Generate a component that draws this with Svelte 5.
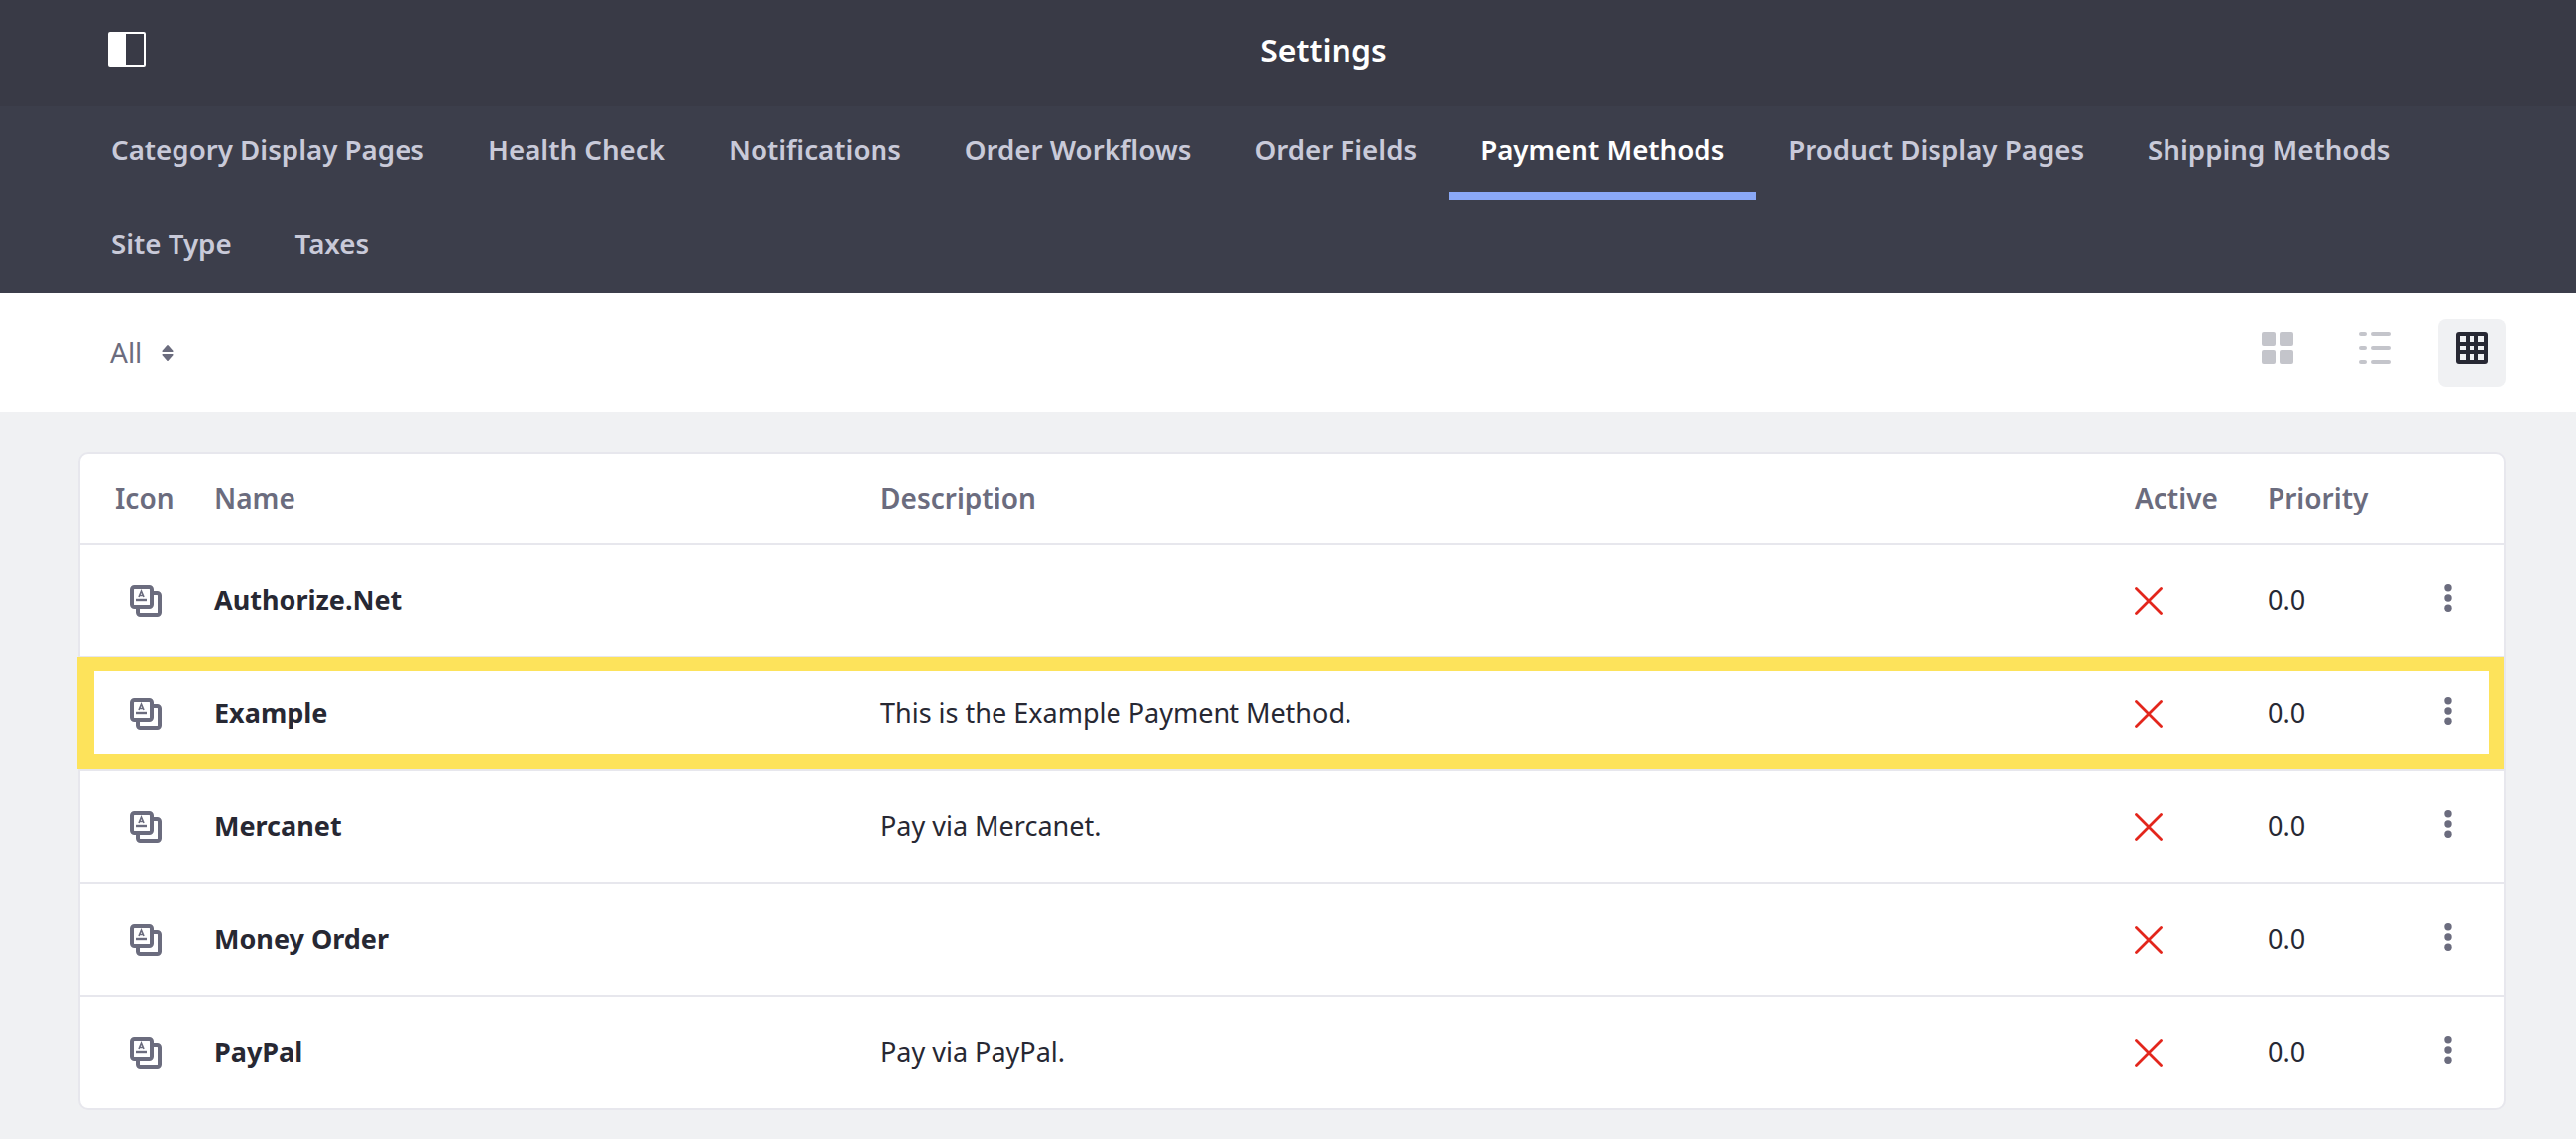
<script>
  const tabs = [
    'Category Display Pages',
    'Health Check',
    'Notifications',
    'Order Workflows',
    'Order Fields',
    'Payment Methods',
    'Product Display Pages',
    'Shipping Methods',
    'Site Type',
    'Taxes'
  ]
  const activeTab = 'Payment Methods'

  const methods = [
    { name: 'Authorize.Net', description: '' },
    { name: 'Example', description: 'This is the Example Payment Method.', marked: true },
    { name: 'Mercanet', description: 'Pay via Mercanet.' },
    { name: 'Money Order', description: '' },
    { name: 'PayPal', description: 'Pay via PayPal.' }
  ]
</script>

<div class="page">
  <header class="topbar">
    <svg class="sidebar-toggle" width="38" height="36" viewBox="0 0 38 36">
      <rect x="0" y="0" width="38" height="36" rx="2" fill="#fff" />
      <rect x="18" y="2" width="18" height="32" fill="#393a46" />
    </svg>
    <span class="title">Settings</span>
  </header>

  <nav class="tabs">
    {#each tabs as tab}
      <a class="tab" class:active={tab === activeTab} href="#top">{tab}</a>
    {/each}
  </nav>

  <div class="toolbar">
    <button class="filter"><span>All</span>
      <svg width="12" height="16" viewBox="0 0 12 16"><path d="M5.2 .6a1 1 0 0 1 1.6 0l4.6 5.2a.7.7 0 0 1-.6 1.2H1.2a.7.7 0 0 1-.6-1.2zM5.2 15.4a1 1 0 0 0 1.6 0l4.6-5.2a.7.7 0 0 0-.6-1.2H1.2a.7.7 0 0 0-.6 1.2z" fill="#6b6c7e" /></svg>
    </button>
    <div class="views">
      <button class="view">
        <svg width="32" height="32" viewBox="0 0 32 32" fill="#c4c5cb">
          <rect width="14" height="14" rx="2" />
          <rect x="18" width="14" height="14" rx="2" />
          <rect y="18" width="14" height="14" rx="2" />
          <rect x="18" y="18" width="14" height="14" rx="2" />
        </svg>
      </button>
      <button class="view">
        <svg width="32" height="32" viewBox="0 0 32 32" fill="#c4c5cb">
          <rect width="8" height="4" rx="2" />
          <rect x="12" width="20" height="4" rx="2" />
          <rect y="14" width="8" height="4" rx="2" />
          <rect x="12" y="14" width="20" height="4" rx="2" />
          <rect y="28" width="8" height="4" rx="2" />
          <rect x="12" y="28" width="20" height="4" rx="2" />
        </svg>
      </button>
      <button class="view on">
        <svg width="32" height="32" viewBox="0 0 32 32">
          <rect width="32" height="32" rx="3" fill="#272833" />
          <g fill="#f0f1f3">
            <rect x="4" y="4" width="6" height="6" />
            <rect x="14" y="4" width="4" height="6" />
            <rect x="22" y="4" width="6" height="6" />
            <rect x="4" y="14" width="6" height="4" />
            <rect x="14" y="14" width="4" height="4" />
            <rect x="22" y="14" width="6" height="4" />
            <rect x="4" y="22" width="6" height="6" />
            <rect x="14" y="22" width="4" height="6" />
            <rect x="22" y="22" width="6" height="6" />
          </g>
        </svg>
      </button>
    </div>
  </div>

  <main class="content">
    <section class="card">
      <div class="row head">
        <span>Icon</span>
        <span>Name</span>
        <span>Description</span>
        <span>Active</span>
        <span>Priority</span>
        <span></span>
      </div>
      {#each methods as m}
        <div class="row item" class:marked={m.marked}>
          <svg class="method-icon" width="32" height="32" viewBox="0 0 32 32" fill="none" stroke="#6b6c7e" stroke-width="4">
            <rect x="2" y="2" width="20" height="20" rx="2.5" />
            <path d="M8 24v3.5a2.5 2.5 0 0 0 2.5 2.5h17a2.5 2.5 0 0 0 2.5-2.5v-17a2.5 2.5 0 0 0-2.5-2.5H24" />
            <path d="M6 15h11" stroke-width="2.4" />
            <path d="M9 12l2.5-6 2.5 6M10 10.5h3" stroke-width="1.6" />
          </svg>
          <strong>{m.name}</strong>
          <span>{m.description}</span>
          <svg class="cross" width="28" height="28" viewBox="0 0 28 28" stroke="#e3261c" stroke-width="2.8" stroke-linecap="round">
            <path d="M1.5 1.5l25 25M26.5 1.5l-25 25" />
          </svg>
          <span>0.0</span>
          <svg class="kebab" width="8" height="28" viewBox="0 0 8 28" fill="#6b6c7e">
            <circle cx="4" cy="3.7" r="3.7" />
            <circle cx="4" cy="14" r="3.7" />
            <circle cx="4" cy="24.3" r="3.7" />
          </svg>
        </div>
      {/each}
    </section>
  </main>
</div>

<style>
  :global(body) {
    margin: 0;
    font-family: "Noto Sans", "Open Sans", sans-serif;
    background: #f0f1f3;
    color: #272833;
  }
  .page {
    min-height: 1149px;
  }
  .topbar {
    position: relative;
    height: 107px;
    box-sizing: border-box;
    padding: 0 0 6px 72px;
    display: flex;
    align-items: center;
    justify-content: center;
    background: #393a46;
  }
  .sidebar-toggle {
    position: absolute;
    left: 109px;
    top: 32px;
  }
  .title {
    color: #fff;
    font-size: 32px;
    font-weight: 600;
  }
  .tabs {
    height: 189px;
    box-sizing: border-box;
    padding: 0 80px;
    display: flex;
    flex-wrap: wrap;
    align-content: flex-start;
    background: #3c3e4b;
  }
  .tab {
    height: 95px;
    box-sizing: border-box;
    padding: 0 32px;
    line-height: 86px;
    border-bottom: 8px solid transparent;
    color: #c9cad9;
    font-size: 27.7px;
    font-weight: 600;
    text-decoration: none;
  }
  .tab.active {
    color: #fff;
    border-bottom-color: #8aa8f6;
  }
  .toolbar {
    height: 120px;
    box-sizing: border-box;
    padding: 0 71px 0 111px;
    display: flex;
    align-items: center;
    justify-content: space-between;
    background: #fff;
  }
  button {
    border: 0;
    background: none;
    padding: 0;
    font: inherit;
  }
  .filter {
    display: flex;
    align-items: center;
    gap: 20px;
    color: #6b6c7e;
    font-size: 28px;
  }
  .filter span {
    padding-bottom: 3px;
  }
  .views {
    display: flex;
    gap: 30px;
  }
  .view {
    width: 68px;
    height: 68px;
    padding-bottom: 10px;
    border-radius: 8px;
    display: flex;
    align-items: center;
    justify-content: center;
  }
  .view.on {
    background: #f0f1f3;
  }
  .content {
    padding: 40px 71px 0 79px;
  }
  .card {
    border: 2px solid #e7e7ed;
    border-radius: 10px;
    background: #fff;
  }
  .row {
    display: grid;
    grid-template-columns: 100px 672px 1265px 134px 178px 1fr;
    align-items: center;
    box-sizing: border-box;
    padding-left: 35px;
    font-size: 27px;
  }
  .row > span,
  .row > strong {
    padding-bottom: 3px;
  }
  .head {
    height: 90px;
    color: #6b6c7e;
    font-size: 28px;
    font-weight: 600;
  }
  .item {
    position: relative;
    height: 114px;
    border-top: 2px solid #e7e7ed;
  }
  /* annotation frame, drawn over the row and past the card's left border */
  .item.marked::after {
    content: "";
    position: absolute;
    inset: -1px 0 0 -3px;
    border: solid #fde35b;
    border-width: 14px 15px 15px 17px;
    pointer-events: none;
  }
  .method-icon {
    margin-left: 15px;
  }
  .item strong {
    font-weight: 700;
  }
  .kebab {
    margin-top: -6px;
  }
</style>
